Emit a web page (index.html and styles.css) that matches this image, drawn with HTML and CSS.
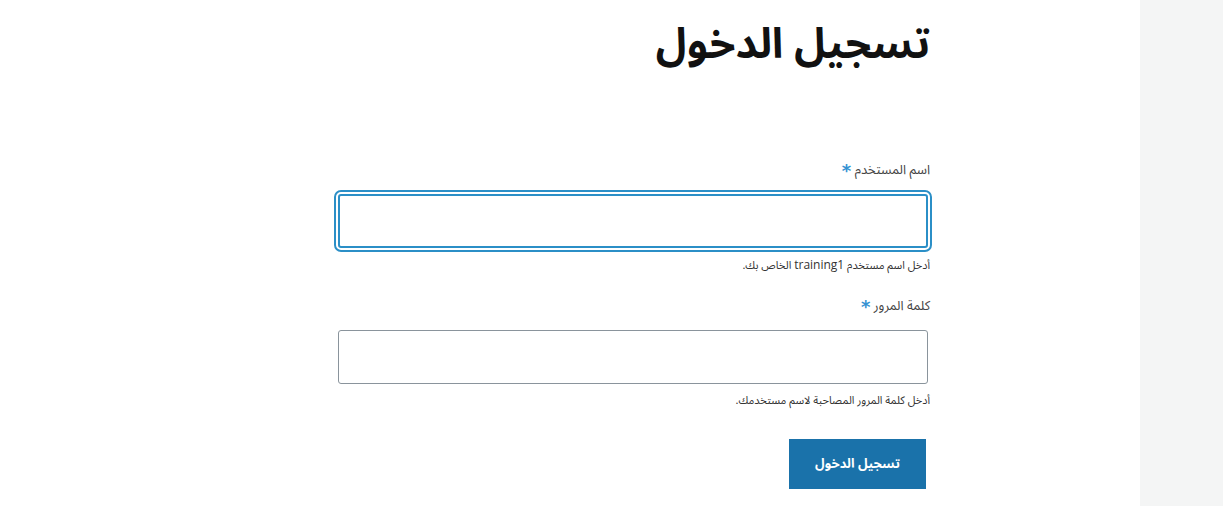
FILE: index.html
```html
<!DOCTYPE html>
<html lang="ar">
<head>
<meta charset="utf-8">
<title>تسجيل الدخول</title>
<link rel="stylesheet" href="styles.css">
</head>
<body>
<div class="page">
  <main class="main" dir="rtl">
    <div class="content">
      <h1 class="title">تسجيل الدخول</h1>
      <form class="form">
        <div class="field">
          <label class="label" for="user">اسم المستخدم <span class="req">*</span></label>
          <input class="input focus" id="user" type="text">
          <div class="help">أدخل اسم مستخدم <span class="latin">training1</span> الخاص بك.</div>
        </div>
        <div class="field">
          <label class="label" for="pass">كلمة المرور <span class="req">*</span></label>
          <input class="input" id="pass" type="password">
          <div class="help">أدخل كلمة المرور المصاحبة لاسم مستخدمك.</div>
        </div>
        <button class="btn" type="button">تسجيل الدخول</button>
      </form>
    </div>
  </main>
  <aside class="side"></aside>
</div>
</body>
</html>
```
FILE: styles.css
```css
html, body {
  margin: 0;
  padding: 0;
  background: #fff;
}
body {
  font-family: "Noto Sans Arabic", "Noto Naskh Arabic", "Liberation Sans", "DejaVu Sans", sans-serif;
  color: #333;
}
.page {
  display: flex;
  direction: ltr;
  height: 506px;
}
.main {
  flex: 1;
  display: flex;
  justify-content: flex-start;
  padding-right: 210px;
}
.side {
  width: 83px;
  background: #f4f5f5;
}
.content {
  width: 592px;
}
.title {
  margin: 10px 0 0 0;
  font-size: 42px;
  font-weight: bold;
  color: #111;
  line-height: 70px;
  text-align: right;
}
.form {
  margin-top: 80px;
}
.field {
  display: flex;
  flex-direction: column;
}
.label {
  font-size: 13px;
  line-height: 20px;
  color: #444;
  margin-bottom: 14px;
}
.req {
  color: #3592d2;
  font-size: 18px;
  font-weight: bold;
  font-family: "DejaVu Sans", sans-serif;
  vertical-align: -3px;
  line-height: 10px;
}
.input {
  box-sizing: border-box;
  width: 590px;
  height: 54px;
  margin: 0 2px 0 0;
  border: 1px solid #8a949c;
  border-radius: 3px;
  background: #fff;
  font-size: 14px;
}
.input.focus {
  border: 2px solid #2b8fc7;
  outline: 2px solid #2b8fc7;
  outline-offset: 2px;
  border-radius: 3px;
}
.help {
  font-size: 11px;
  line-height: 16px;
  color: #333;
  margin-top: 9px;
  margin-bottom: 22px;
}
.latin {
  font-family: "Open Sans", sans-serif;
  font-size: 12px;
}
.btn {
  display: block;
  margin: 8px 4px 0 0;
  width: 137px;
  height: 50px;
  border: none;
  background: #1a72aa;
  color: #fff;
  font-family: inherit;
  font-size: 13px;
  font-weight: bold;
}
```
